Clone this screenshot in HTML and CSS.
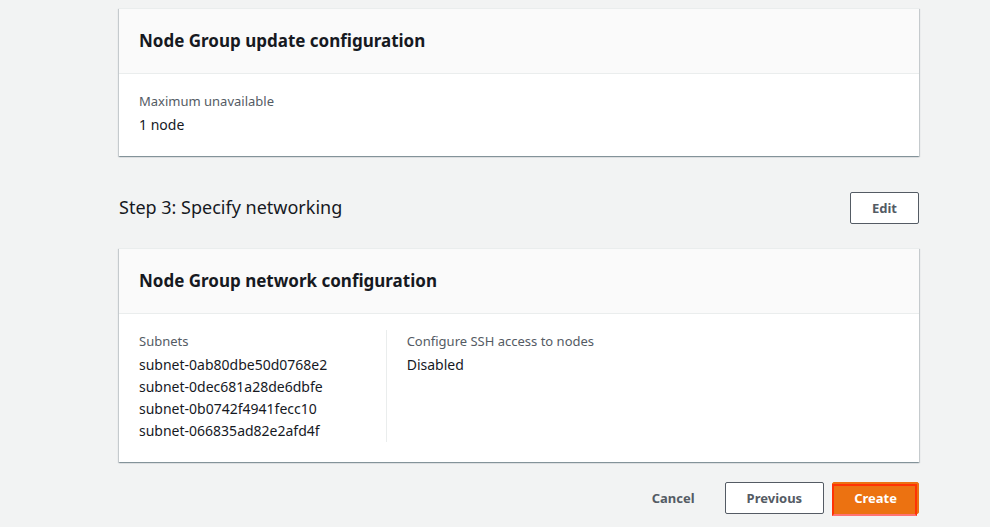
FILE: index.html
```html
<!DOCTYPE html>
<html lang="en">
<head>
<meta charset="utf-8">
<meta name="viewport" content="width=device-width, initial-scale=1">
<title>Review and create</title>
<link rel="stylesheet" href="styles.css">
</head>
<body>
<main class="page">
  <section class="card">
    <header class="card-header"><h3 class="card-title">Node Group update configuration</h3></header>
    <dl class="columns">
      <div class="column">
        <dt>Maximum unavailable</dt>
        <dd>1 node</dd>
      </div>
    </dl>
  </section>

  <div class="step">
    <h2 class="step-title">Step 3: Specify networking</h2>
    <button type="button" class="button">Edit</button>
  </div>

  <section class="card">
    <header class="card-header"><h3 class="card-title">Node Group network configuration</h3></header>
    <dl class="columns">
      <div class="column">
        <dt>Subnets</dt>
        <dd>subnet-0ab80dbe50d0768e2</dd>
        <dd>subnet-0dec681a28de6dbfe</dd>
        <dd>subnet-0b0742f4941fecc10</dd>
        <dd>subnet-066835ad82e2afd4f</dd>
      </div>
      <div class="column">
        <dt>Configure SSH access to nodes</dt>
        <dd>Disabled</dd>
      </div>
    </dl>
  </section>

  <div class="actions">
    <button type="button" class="button link">Cancel</button>
    <button type="button" class="button">Previous</button>
    <button type="button" class="button primary">Create</button>
  </div>
</main>
</body>
</html>
```

FILE: styles.css
```css
* {
  box-sizing: border-box;
}

body {
  margin: 0;
  background: #f2f3f3;
  color: #16191f;
  font: 13px/22px "Noto Sans", "Open Sans", sans-serif;
}

.page {
  padding: 8px 71px 11px 119px;
}

.card {
  background: #fff;
  border-top: 1px solid #eaeded;
  box-shadow: 0 1px 1px 0 rgba(0, 36, 46, 0.25), 1px 1px 1px 0 rgba(0, 36, 46, 0.15), -1px 1px 1px 0 rgba(0, 36, 46, 0.15);
}

.card-header {
  display: flex;
  align-items: center;
  min-height: 65px;
  padding: 0 20px;
  background: #fafafa;
  border-bottom: 1px solid #eaeded;
}

.card-title,
.step-title {
  margin: 0;
  line-height: 22px;
}

.card-title {
  font-size: 17px;
}

.step-title {
  padding-bottom: 2px;
  font-size: 18px;
  font-weight: 400;
}

.columns {
  display: grid;
  grid-template-columns: repeat(3, 1fr);
  margin: 0;
  padding: 16px 0 20px;
}

.column {
  padding: 0 20px;
}

.column + .column {
  border-left: 1px solid #eaeded;
}

dt {
  margin-bottom: 2px;
  color: #545b64;
}

dd {
  margin: 0;
  font-size: 14px;
}

.step {
  display: flex;
  align-items: center;
  justify-content: space-between;
  margin: 36px 0 24px;
}

.button {
  position: relative;
  height: 32px;
  padding: 0 21px;
  border: 1px solid #545b64;
  border-radius: 2px;
  background: #fff;
  color: #545b64;
  font: inherit;
  font-weight: 700;
  cursor: pointer;
}

.actions {
  display: flex;
  justify-content: flex-end;
  gap: 8px;
  margin-top: 20px;
}

.link {
  border-color: transparent;
  background: transparent;
}

.primary {
  border-color: #ec7211;
  background: #ec7211;
  color: #fff;
}

/* Highlight frame laid over the main action */
.primary::after {
  content: "";
  position: absolute;
  inset: 1px 1px -3px -1px;
  border: 2px solid #ff3305;
  border-bottom-color: #ff7373;
}
```
